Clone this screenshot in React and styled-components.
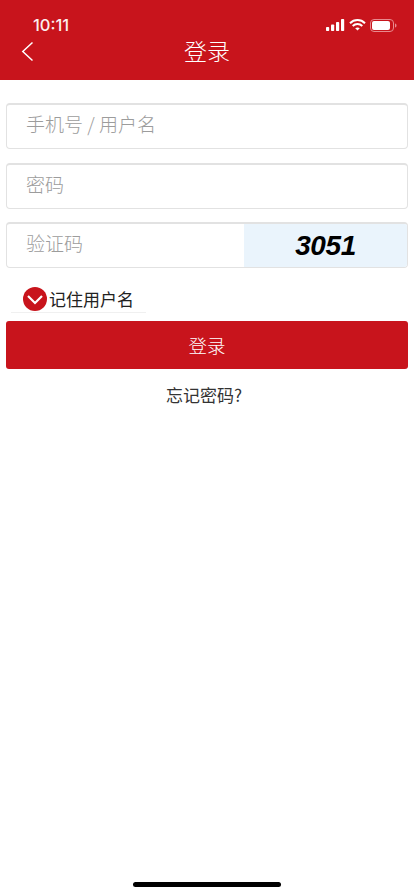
import React from "react";
import styled, { createGlobalStyle } from "styled-components";

const Global = createGlobalStyle`
  html, body { margin: 0; padding: 0; background: #fff; }
  body { font-family: "Liberation Sans", "Noto Sans CJK SC", sans-serif; }
`;
const CJK = `"Noto Sans CJK SC", sans-serif`;
const RED = "#c8141c";

const Page = styled.div`
  position: relative;
  width: 414px;
  height: 896px;
  overflow: hidden;
  background: #fff;
  display: flex;
  flex-direction: column;
`;
const Header = styled.header`
  height: 80px;
  background: ${RED};
  color: #fff;
  display: flex;
  flex-direction: column;
  flex: none;
`;
const StatusBar = styled.div`
  height: 34px;
  padding: 16px 17px 0 33px;
  box-sizing: border-box;
  display: flex;
  align-items: center;
  justify-content: space-between;
`;
const Time = styled.span`
  font-family: Inter, sans-serif;
  font-size: 16.5px;
  font-weight: 500;
  line-height: 18px;
  color: #fbeeee;
`;
const StatusIcons = styled.div`
  display: flex;
  align-items: center;
  gap: 4px;
`;
const NavBar = styled.div`
  height: 36px;
  position: relative;
  display: flex;
  align-items: flex-start;
  justify-content: center;
`;
const Back = styled.button`
  position: absolute;
  left: 21px;
  top: 7px;
  padding: 0;
  border: 0;
  background: none;
  display: flex;
`;
const Title = styled.h1`
  margin: 1px 0 0;
  font-family: ${CJK};
  font-size: 23px;
  font-weight: 300;
  line-height: 30px;
  color: #fff;
`;
const Form = styled.form`
  padding: 23px 6px 0;
  display: flex;
  flex-direction: column;
`;
const Field = styled.div`
  height: 46px;
  margin-bottom: ${p => p.$mb}px;
  box-sizing: border-box;
  border: 1px solid #e2e2e2;
  border-top-width: 2px;
  border-radius: 4px;
  display: flex;
  align-items: stretch;
  overflow: hidden;
`;
const Placeholder = styled.div`
  flex: 1;
  padding-left: 19px;
  font-family: ${CJK};
  font-size: 19px;
  font-weight: 300;
  line-height: 38px;
  color: #9c9c9c;
`;
const Captcha = styled.div`
  width: 163px;
  background: #eaf4fc;
  display: flex;
  align-items: center;
  justify-content: center;
  font-family: "Liberation Sans", sans-serif;
  font-size: 28px;
  font-weight: 700;
  font-style: italic;
  letter-spacing: -0.4px;
  color: #000;
`;
const Remember = styled.div`
  width: 135px;
  height: 27px;
  margin: 0 0 8px 5px;
  border-bottom: 1px solid #f0f0f0;
  display: flex;
  align-items: center;
  gap: 2px;
  padding-left: 12px;
  box-sizing: border-box;
`;
const RememberLabel = styled.span`
  font-family: ${CJK};
  font-size: 17px;
  font-weight: 400;
  line-height: 26px;
  color: #222;
`;
const Submit = styled.button`
  height: 48px;
  border: 0;
  border-radius: 3px;
  padding: 0;
  background: ${RED};
  color: #fff;
  font-family: ${CJK};
  font-size: 18.5px;
  font-weight: 300;
`;
const Forgot = styled.a`
  margin: 14px 0 0 -6px;
  text-align: center;
  font-family: ${CJK};
  font-size: 17px;
  font-weight: 400;
  line-height: 24px;
  color: #333;
`;
const HomeBar = styled.div`
  position: absolute;
  left: 133px;
  top: 882px;
  width: 148px;
  height: 5px;
  border-radius: 3px;
  background: #000;
`;

export default function App() {
  return (
    <Page>
      <Global />
      <Header>
        <StatusBar>
          <Time>10:11</Time>
          <StatusIcons>
            <svg width="19" height="12" viewBox="0 0 19 12" fill="#fff">
              <rect x="0" y="8" width="3.2" height="4" rx="0.8" />
              <rect x="5" y="5.5" width="3.2" height="6.5" rx="0.8" />
              <rect x="10" y="3" width="3.2" height="9" rx="0.8" />
              <rect x="15" y="0" width="3.2" height="12" rx="0.8" />
            </svg>
            <svg width="17" height="12" viewBox="0 0 17 12" fill="none" stroke="#fff" strokeWidth="2">
              <path d="M1 4.2C5.2 0 11.8 0 16 4.2" />
              <path d="M3.7 7C6.4 4.4 10.6 4.4 13.3 7" />
              <path d="M8.5 11.6 6.2 9.3C7.5 8.2 9.5 8.2 10.8 9.3Z" fill="#fff" stroke="none" />
            </svg>
            <svg width="27" height="13" viewBox="0 0 27 13" fill="none">
              <rect x="0.5" y="0.5" width="23" height="12" rx="3.5" stroke="#e88a8e" />
              <rect x="2" y="2" width="18" height="9" rx="2" fill="#fff" />
              <path d="M25 4.5C26 4.8 26.5 5.5 26.5 6.5S26 8.2 25 8.5Z" fill="#e88a8e" />
            </svg>
          </StatusIcons>
        </StatusBar>
        <NavBar>
          <Back type="button" aria-label="返回">
            <svg width="13" height="21" viewBox="0 0 13 21" fill="none" stroke="#fff" strokeWidth="1.5">
              <path d="M11.5 1.5 1.8 10.5l9.7 9" />
            </svg>
          </Back>
          <Title>登录</Title>
        </NavBar>
      </Header>
      <Form>
        <Field $mb={14}><Placeholder>手机号 / 用户名</Placeholder></Field>
        <Field $mb={13}><Placeholder>密码</Placeholder></Field>
        <Field $mb={18}>
          <Placeholder>验证码</Placeholder>
          <Captcha>3051</Captcha>
        </Field>
        <Remember>
          <svg width="24" height="24" viewBox="0 0 24 24">
            <circle cx="12" cy="12" r="12" fill={RED} />
            <path d="M5 9l7 7 7-7" fill="none" stroke="#fff" strokeWidth="2.2" />
          </svg>
          <RememberLabel>记住用户名</RememberLabel>
        </Remember>
        <Submit type="button">登录</Submit>
        <Forgot>忘记密码?</Forgot>
      </Form>
      <HomeBar />
    </Page>
  );
}
